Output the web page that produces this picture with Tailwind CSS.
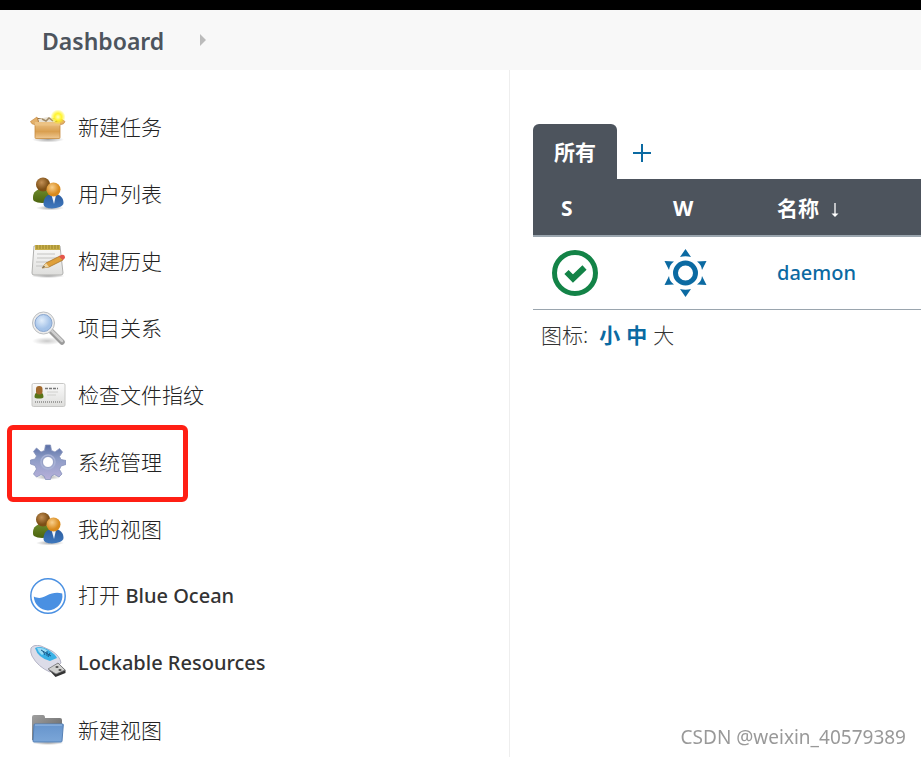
<!DOCTYPE html>
<html lang="zh-CN">
<head>
<meta charset="utf-8">
<meta name="viewport" content="width=device-width, initial-scale=1">
<title>Dashboard</title>
<script src="https://cdn.jsdelivr.net/npm/@tailwindcss/browser@4"></script>
</head>
<body class="min-h-screen flex flex-col bg-white font-['Noto_Sans','Noto_Sans_CJK_SC',sans-serif] text-[21px] leading-7 text-[#333]">
<svg class="absolute size-0" aria-hidden="true">
  <defs>
    <linearGradient id="box" x1="0" y1="0" x2="0" y2="1"><stop offset="0" stop-color="#eac083"/><stop offset=".55" stop-color="#d99f50"/><stop offset="1" stop-color="#efc892"/></linearGradient>
    <radialGradient id="star"><stop offset="0" stop-color="#ffffc0"/><stop offset=".45" stop-color="#fff32c"/><stop offset="1" stop-color="#fff000" stop-opacity="0"/></radialGradient>
    <radialGradient id="shade"><stop offset="0" stop-color="#000" stop-opacity=".35"/><stop offset="1" stop-color="#000" stop-opacity="0"/></radialGradient>
    <radialGradient id="brown" cx=".4" cy=".35"><stop offset="0" stop-color="#c39055"/><stop offset="1" stop-color="#7d4f16"/></radialGradient>
    <radialGradient id="orange" cx=".4" cy=".35"><stop offset="0" stop-color="#f8cf8c"/><stop offset="1" stop-color="#d98a1c"/></radialGradient>
    <linearGradient id="green" x1="0" y1="0" x2="0" y2="1"><stop offset="0" stop-color="#6c8a2c"/><stop offset="1" stop-color="#4c640e"/></linearGradient>
    <linearGradient id="blue" x1="0" y1="0" x2="0" y2="1"><stop offset="0" stop-color="#2c5c9e"/><stop offset="1" stop-color="#3f78bd"/></linearGradient>
    <linearGradient id="paper" x1="0" y1="0" x2="0" y2="1"><stop offset="0" stop-color="#fbfbfb"/><stop offset="1" stop-color="#dededc"/></linearGradient>
    <radialGradient id="lens" cx=".4" cy=".35"><stop offset="0" stop-color="#e2eefb"/><stop offset="1" stop-color="#a3c2e8"/></radialGradient>
    <linearGradient id="gear" x1="0" y1="0" x2="0" y2="1"><stop offset="0" stop-color="#5a6fa5"/><stop offset=".4" stop-color="#8d9cc6"/><stop offset="1" stop-color="#b8b0da"/></linearGradient>
    <linearGradient id="folder" x1="0" y1="0" x2="0" y2="1"><stop offset="0" stop-color="#6694cc"/><stop offset="1" stop-color="#7ba6d8"/></linearGradient>
    <linearGradient id="back" x1="0" y1="0" x2="1" y2="1"><stop offset="0" stop-color="#a0a0a0"/><stop offset="1" stop-color="#606060"/></linearGradient>
    <symbol id="people" viewBox="0 0 36 36">
      <ellipse cx="20" cy="32" rx="14" ry="2.500" fill="url(#shade)"/>
      <path d="M3 21c0-5 4-8 9-8s9 4 9 9v3c-5 2.500-13 2.500-17 0-1-1-1-2-1-4z" fill="url(#green)"/>
      <circle cx="13" cy="8.500" r="7" fill="url(#brown)"/>
      <path d="M13.500 28c0-6 3-10 10-10s10 4 10 9c0 6-20 8-20 1z" fill="url(#blue)"/>
      <path d="M21.500 19l2.500 9 2-9z" fill="#f2f5fa"/>
      <circle cx="23.500" cy="13.500" r="7" fill="url(#orange)"/>
    </symbol>
  </defs>
</svg>

<header>
  <div class="h-[10px] bg-black"></div>
  <nav aria-label="Breadcrumb" class="flex h-[60px] items-center gap-9 bg-[#f8f8f8] px-[42px]">
    <a href="#" class="pt-px font-semibold text-[23px] text-[#4d545d]">Dashboard</a>
    <svg class="h-3 w-[6px]" viewBox="0 0 6 12" aria-hidden="true"><path d="M0 0l6 6-6 6z" fill="#bbb"/></svg>
  </nav>
</header>

<div class="flex grow">
  <aside class="w-[510px] shrink-0 border-r border-[#eee] pt-[23px]">
    <ul class="[&_a]:flex [&_a]:h-[67px] [&_a]:w-fit [&_a]:items-center [&_a]:gap-3 [&_a]:pl-[30px] [&_svg]:size-9 [&_svg]:shrink-0 -mb-6 text-[#222]">
      <li><a href="#"><svg viewBox="0 0 36 36" aria-hidden="true">
        <ellipse cx="18" cy="30.500" rx="16" ry="3" fill="url(#shade)"/>
        <path d="M7 9h22l3 6H4z" fill="#8c6637"/><path d="M8 10l10-2 9 2-2 3H9z" fill="#e9e2d4"/>
        <path d="M12 10l4 2 3-3 4 3" fill="none" stroke="#a18a66" stroke-width="1.500"/>
        <path d="M5 14h25v14.500q0 1-1 1H6q-1 0-1-1z" fill="url(#box)" stroke="#c68b3f" stroke-width=".8"/>
        <path d="M7 8L.5 12.500q1 3 4 3l4-2zM28 8l7 4.500q-1 3-4 3l-4-2z" fill="#e3b06a" stroke="#c58b46" stroke-width=".7"/>
        <path d="M5 13h25v3.500H5z" fill="#ecc283"/><circle cx="28" cy="8" r="7.500" fill="url(#star)"/>
      </svg><span class="font-light">新建任务</span></a></li>
      <li><a href="#"><svg aria-hidden="true"><use href="#people"/></svg><span class="font-light">用户列表</span></a></li>
      <li><a href="#"><svg viewBox="0 0 36 36" aria-hidden="true">
        <ellipse cx="18" cy="33" rx="17" ry="2" fill="url(#shade)"/>
        <path d="M4 3h26l3 27q0 2-2 2H4q-2 0-2-2z" fill="url(#paper)" stroke="#b0b0ae"/>
        <path d="M5 2h25v5H5z" fill="#c9b04c"/><path d="M7 2v4m3-4v4m3-4v4m3-4v4m3-4v4m3-4v4m3-4v4m3-4v4" stroke="#98832a"/>
        <path d="M7 11h18M7 15h20M6 19h15M6 23h9" stroke="#c4c4c2" stroke-width="1.200"/>
        <path d="M12 25l4-5 14-7 3 4-14 7z" fill="#dfa03b" stroke="#a87428" stroke-width=".8"/><path d="M12 25l4-5 3 4z" fill="#efd7a5"/><path d="M12 25l2-2 1 1z" fill="#333"/>
        <path d="M29 13.500l2-1.500q4-1 4 3l-2 2z" fill="#e4574c"/>
      </svg><span class="font-light">构建历史</span></a></li>
      <li><a href="#"><svg viewBox="0 0 36 36" aria-hidden="true">
        <ellipse cx="17" cy="31" rx="15" ry="4" fill="url(#shade)" opacity=".6"/>
        <path d="M21 21l11 11" stroke="#9b9b9b" stroke-width="5.500" stroke-linecap="round"/><path d="M22 21l10 10" stroke="#cfcfcf" stroke-width="2.500" stroke-linecap="round"/>
        <circle cx="13.500" cy="13" r="11" fill="#ececec" stroke="#bcbec0"/>
        <circle cx="13.500" cy="13" r="8.500" fill="url(#lens)" stroke="#89a6cf"/>
      </svg><span class="font-light">项目关系</span></a></li>
      <li><a href="#"><svg viewBox="0 0 36 36" aria-hidden="true">
        <rect x="2" y="6.500" width="33" height="23" rx="1.500" fill="url(#paper)" stroke="#c8c8c6"/>
        <path d="M4.500 20q0-5 4.500-5t4.500 5c0 2-9 2-9 0z" fill="#587519"/><rect x="6" y="9" width="6.500" height="8.500" rx="3" fill="#a1692c"/>
        <path d="M15 11.500h13" stroke="#777" stroke-width="1.600" stroke-dasharray="3 1"/><path d="M17 15h11M17 18h9" stroke="#d0d0ce"/>
        <path d="M5 25h28" stroke="#a0a09e" stroke-width="2" stroke-dasharray="1 1"/>
      </svg><span class="font-light">检查文件指纹</span></a></li>
      <li class="relative"><a href="#"><svg viewBox="0 0 36 36" aria-hidden="true">
        <ellipse cx="18" cy="33" rx="13" ry="3" fill="url(#shade)"/>
        <path fill-rule="evenodd" stroke-linejoin="round" d="M15.500 1h5l1 5.500 3.500 1.500 4.500-3.500 3 3.500-3 4.500 1.500 3 5 1v4l-5 1.500-1.500 3.500 2.500 4.500-3 3-4.500-2.500-3 1.500-1 3.500h-5l-1.500-3.500-3-1.500-4.500 2.500-3-3L6.500 25 5 21.500.5 20v-4L5 15l1.500-3-3-4.500 3-3.500L11 8l3.500-1.500zM18 12.500a5.500 5.500 0 1 0 0 11 5.500 5.500 0 1 0 0-11z" fill="url(#gear)" stroke="#8793bb" stroke-width=".8"/>
        <circle cx="18" cy="18" r="7" fill="none" stroke="#a9b3d6" stroke-width="1.500"/>
      </svg><span class="font-light">系统管理</span></a>
        <span class="pointer-events-none absolute -top-[3px] left-[7px] h-[77px] w-[181px] rounded-md border-5 border-[#ff1f14]"></span></li>
      <li><a href="#"><svg aria-hidden="true"><use href="#people"/></svg><span class="font-light">我的视图</span></a></li>
      <li><a href="#"><svg viewBox="0 0 36 36" aria-hidden="true">
        <circle cx="18" cy="18" r="17.200" fill="#fff" stroke="#4a90e2" stroke-width="1.500"/>
        <path d="M3.800 18.500c5 2.500 8 1.500 13-1s10-3.500 15.400-2A14.500 14.500 0 0 1 18 32.500 14.500 14.500 0 0 1 3.800 18.500z" fill="#4a90e2"/>
      </svg><span><span class="font-light">打开</span> <span class="text-[20px] font-medium text-[#333]">Blue Ocean</span></span></a></li>
      <li><a href="#"><svg viewBox="0 0 36 36" aria-hidden="true">
        <path d="M1 3Q4-1 11 1l11 5q8 5 9 12l-11 9Q8 22 2 11 0 7 1 3z" fill="#dcdce8" stroke="#b4b4c6"/>
        <path d="M5 3q6-3 15 3 6 4 7 7l-7 3Q8 13 5 3z" fill="#3bb1e6"/><path d="M7 3q6-1 11 3l-6 4Q8 7 7 3z" fill="#98dcf6"/><path d="M11 5l10 6m-8-5l2 4m2-4v5m3-3l-2 4" stroke="#17598b"/>
        <path d="M19 25l9-7 7.500 7v3l-10 4z" fill="#333"/><path d="M18 24l10-6 7 7-9 4z" fill="#d0d0ce" stroke="#77777a" stroke-width=".8"/><path d="M25 22l2-1 2 1-2 1zM28 25l2-1 2 1-2 1z" fill="#333"/>
      </svg><span class="text-[20px] font-medium text-[#333]">Lockable Resources</span></a></li>
      <li><a href="#"><svg viewBox="0 0 36 36" aria-hidden="true">
        <ellipse cx="18" cy="31" rx="16" ry="2" fill="url(#shade)"/>
        <path d="M2 5q0-2 2-2h9q2 0 2 3h15q2 0 2 2v20H2z" fill="url(#back)"/>
        <path d="M5 12h27.500q1 0 .8 1l-1.300 16q0 1-1 1H4q-1 0-1-1l1-16q0-1 1-1z" fill="url(#folder)" stroke="#5580b5"/><path d="M5 13h27" stroke="#9dbfe6"/>
      </svg><span class="font-light">新建视图</span></a></li>
    </ul>
  </aside>

  <main class="min-w-0 grow pt-[54px] pl-[23px]">
    <div class="flex h-[55px] items-stretch">
      <a href="#" class="flex items-center rounded-t-[6px] bg-[#4d545d] px-[21px] font-bold text-white">所有</a>
      <a href="#" aria-label="新建视图" class="flex items-center pt-[3px] pl-4">
        <svg class="size-[18px]" viewBox="0 0 18 18" aria-hidden="true"><path d="M9 0v18M0 9h18" stroke="#0b6aa2" stroke-width="2"/></svg></a>
    </div>
    <table class="w-full table-fixed border-collapse text-left">
      <thead class="bg-[#4d545d] text-white">
        <tr class="h-[57px] border-b-2 border-[#9aa5ae]">
          <th class="w-[111px] pt-px pl-7">S</th>
          <th class="w-[113px] pt-px pl-[29px]">W</th>
          <th class="pt-px pl-5">名称<svg class="ml-3 inline-block h-4 w-2" viewBox="0 0 8 16" aria-hidden="true"><path d="M4 1v12" stroke="#fff" stroke-width="1.300"/><path d="M.5 11.500h7L4 15z" fill="#fff"/></svg></th>
        </tr>
      </thead>
      <tbody>
        <tr class="h-[73px] border-b border-[#9aa5ae]">
          <td class="pl-[18px]"><svg class="size-12" viewBox="0 0 48 48" role="img" aria-label="成功"><circle cx="24" cy="24" r="20.500" fill="none" stroke="#138347" stroke-width="5"/><path d="M15.500 23l6.500 6.500 11.500-11" fill="none" stroke="#138347" stroke-width="6"/></svg></td>
          <td class="pl-[18px]"><svg class="size-12" viewBox="0 0 48 48" role="img" aria-label="健康"><circle cx="23.500" cy="24" r="10" fill="none" stroke="#0b6aa2" stroke-width="5"/><path d="M23.500 0l5.500 8q-5.500-1.500-11 0zM23.500 48l5.500-8q-5.500 1.500-11 0zM2.500 12l9.500.5q-4.500 3-5 8.500zM44.500 12l-9.500.5q4.500 3 5 8.500zM2.500 36l9.500-.5q-4.500-3-5-8.500zM44.500 36l-9.500-.5q4.500-3 5-8.500z" fill="#0b6aa2"/></svg></td>
          <td class="pt-px pl-5 text-[20px] font-medium"><a href="#" class="text-[#0b6aa2]">daemon</a></td>
        </tr>
      </tbody>
    </table>
    <div class="flex gap-[6px] pt-[11px] pl-2"><span class="mr-[5px] font-light">图标:</span><a href="#" class="font-bold text-[#0b6aa2]">小</a><a href="#" class="font-bold text-[#0b6aa2]">中</a><span class="font-light">大</span></div>
  </main>
</div>
<div class="fixed right-[15px] bottom-[6px] text-[19px] text-[#999]">CSDN @weixin_40579389</div>
</body>
</html>
